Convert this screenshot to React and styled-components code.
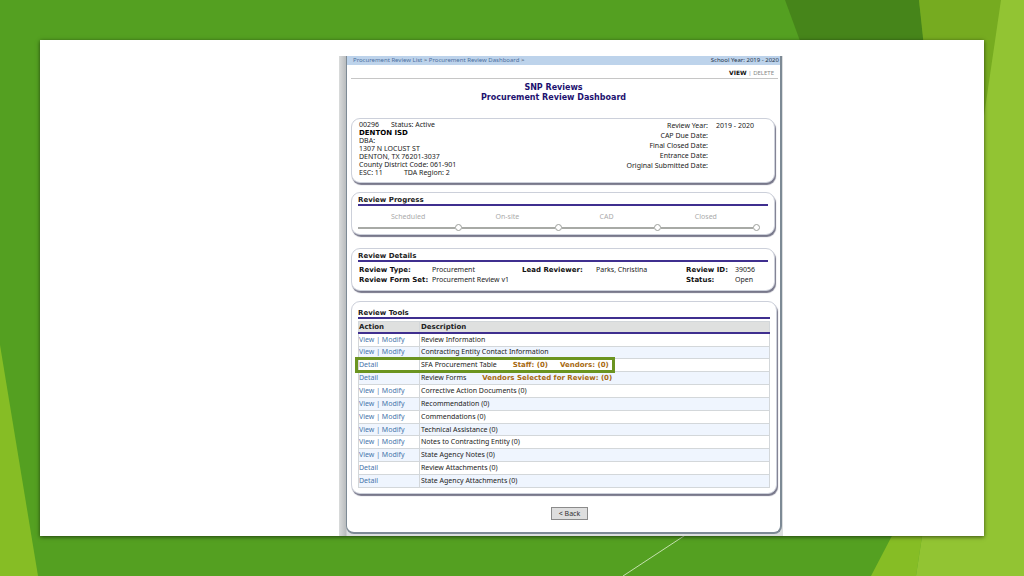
import React from 'react'
import styled, { createGlobalStyle } from 'styled-components'

const details = [
    ['Review Type:', 'Procurement', 'Lead Reviewer:', 'Parks, Christina', 'Review ID:', '39056'],
    ['Review Form Set:', 'Procurement Review v1', '', '', 'Status:', 'Open'],
]

const tools = [
    { name: 'Review Information', edit: true },
    { name: 'Contracting Entity Contact Information', edit: true },
    { name: 'SFA Procurement Table', notes: ['Staff: (0)', 'Vendors: (0)'], marked: true },
    { name: 'Review Forms', notes: ['Vendors Selected for Review: (0)'] },
    { name: 'Corrective Action Documents (0)', edit: true },
    { name: 'Recommendation (0)', edit: true },
    { name: 'Commendations (0)', edit: true },
    { name: 'Technical Assistance (0)', edit: true },
    { name: 'Notes to Contracting Entity (0)', edit: true },
    { name: 'State Agency Notes (0)', edit: true },
    { name: 'Review Attachments (0)' },
    { name: 'State Agency Attachments (0)' },
]

const dates = ['CAP Due Date:', 'Final Closed Date:', 'Entrance Date:', 'Original Submitted Date:']

function Backdrop() {
    return (
        <Facets viewBox="0 0 1024 576" preserveAspectRatio="none" aria-hidden="true">
            <polygon points="0,345 38,576 0,576" fill="#86bd25" />
            <polygon points="785,0 919,0 926,60 807,60" fill="#46851a" />
            <polygon points="919,0 1024,0 1024,200 940,200" fill="#76ab20" />
            <polygon points="1001,0 1024,0 1024,576 960,576 960,280" fill="#92c433" />
            <polygon points="895,530 923,530 916,576 871,576" fill="#86bd25" />
            <polygon points="923,530 1024,530 1024,576 916,576" fill="#92c433" />
            <line x1="690" y1="532" x2="623" y2="576" stroke="#c5e0ae" strokeWidth="1" />
        </Facets>
    )
}

function App() {
    return (
        <Slide>
            <GlobalStyle />
            <Backdrop />
            <Sheet>
                <Frame>
                    <Page>
                        <TopBar>
                            <nav>
                                <a href="#list">Procurement Review List</a> &gt; <a href="#dashboard">Procurement Review Dashboard</a> &gt;
                            </nav>
                            <span>School Year: 2019 - 2020</span>
                        </TopBar>
                        <Modes>
                            <a href="#view">VIEW</a> | <span>DELETE</span>
                        </Modes>
                        <Title>SNP Reviews<br />Procurement Review Dashboard</Title>

                        <Entity>
                            <Address>
                                <div><Gap>00296</Gap>Status: Active</div>
                                <h2>DENTON ISD</h2>
                                <div>DBA:</div>
                                <div>1307 N LOCUST ST</div>
                                <div>DENTON, TX 76201-3037</div>
                                <div>County District Code: 061-901</div>
                                <div><Gap $wide>ESC: 11</Gap>TDA Region: 2</div>
                            </Address>
                            <Dates>
                                <dt>Review Year:</dt><dd>2019 - 2020</dd>
                                {dates.map((label) => (
                                    <React.Fragment key={label}><dt>{label}</dt><dd /></React.Fragment>
                                ))}
                            </Dates>
                        </Entity>

                        <Progress>
                            <Heading>Review Progress</Heading>
                            <Steps>
                                {['Scheduled', 'On-site', 'CAD', 'Closed'].map((step) => (
                                    <Step key={step}>
                                        <StepName>{step}</StepName>
                                        <Track><Line /><Ring /></Track>
                                    </Step>
                                ))}
                            </Steps>
                        </Progress>

                        <Details>
                            <Heading>Review Details</Heading>
                            <DetailGrid>
                                {details.flat().map((text, i) => (
                                    i % 2 ? <dd key={i}>{text}</dd> : <dt key={i}>{text}</dt>
                                ))}
                            </DetailGrid>
                        </Details>

                        <Tools>
                            <Heading>Review Tools</Heading>
                            <Table>
                                <thead>
                                    <tr><th>Action</th><th>Description</th></tr>
                                </thead>
                                <tbody>
                                    {tools.map((tool) => (
                                        <tr key={tool.name}>
                                            <ActionCell $marked={tool.marked}>
                                                {tool.edit
                                                    ? <><a href="#view">View</a> | <a href="#modify">Modify</a></>
                                                    : <a href="#detail">Detail</a>}
                                            </ActionCell>
                                            <td>
                                                {tool.name}
                                                {tool.notes && tool.notes.map((note, i) => <Note key={note} $next={i > 0}>{note}</Note>)}
                                            </td>
                                        </tr>
                                    ))}
                                </tbody>
                            </Table>
                        </Tools>

                        <BackButton type="button">&lt; Back</BackButton>
                    </Page>
                </Frame>
            </Sheet>
        </Slide>
    )
}

const bold = '"DejaVu Sans", Verdana, sans-serif'

const GlobalStyle = createGlobalStyle`
*, *::after{
    box-sizing: border-box;
    margin: 0;
    padding: 0;
}
body{
    background: #54a021;
    color: #222;
    font-family: "Noto Sans", sans-serif;
    font-size: 7px;
    line-height: 8px;
}
a{
    color: inherit;
    text-decoration: none;
}
`

const Slide = styled.div`
position: relative;
min-height: 100vh;
padding: 40px;
overflow: hidden;
`

const Facets = styled.svg`
position: absolute;
inset: 0;
width: 100%;
height: 100%;
`

const Sheet = styled.main`
position: relative;
display: grid;
grid-template-columns: 299fr 444fr 201fr;
padding-top: 16px;
background: #fff;
box-shadow: 0 1px 4px rgba(0, 0, 0, 0.6);
`

const Frame = styled.div`
grid-column: 2;
padding: 0 1px 2px 7px;
background: linear-gradient(90deg, #d9dbdb, #b9bcbe 7px, #dcdedf 8px);
`

const Page = styled.div`
display: flex;
flex-direction: column;
padding-bottom: 12px;
background: #fff;
border: solid #7d8a95;
border-width: 0 2px 2px 1px;
border-radius: 0 0 8px 8px;
`

const TopBar = styled.header`
display: flex;
justify-content: space-between;
padding: 0 1px 0 6px;
background: #bdd3eb;
color: #26354c;
font-size: 6px;
line-height: 9px;
a{
    color: #4c6f9e;
}
`

const Modes = styled.div`
margin: 0 2px 0 4px;
padding: 3px 4px 0 0;
border-bottom: 1px solid #c6c6c6;
color: #888;
font-size: 6px;
line-height: 9px;
text-align: right;
a{
    color: #111;
    font-family: ${bold};
    font-weight: bold;
}
`

const Title = styled.h1`
padding: 4px 0 15px;
margin-right: 20px;
color: #1d1270;
font-family: ${bold};
font-size: 8px;
line-height: 10px;
text-align: center;
`

const Panel = styled.section`
margin: 0 5px 0 4px;
padding: 0 6px;
border: 1px solid #ccd0da;
border-radius: 9px;
background: #fff;
box-shadow: 1px 2px 1px #77778a;
`

const Entity = styled(Panel)`
display: flex;
justify-content: space-between;
padding: 2px 17px 5px 7px;
margin-bottom: 9px;
`

const Address = styled.div`
h2{
    color: #000;
    font-family: ${bold};
    font-size: 7px;
    line-height: 8px;
}
`

const Gap = styled.span`
margin-right: ${({ $wide }) => ($wide ? '21px' : '12px')};
`

const Dates = styled.dl`
display: grid;
grid-template-columns: auto 41px;
align-content: start;
column-gap: 8px;
line-height: 10px;
text-align: right;
dd{
    text-align: left;
    white-space: nowrap;
}
`

const Heading = styled.h3`
padding: 3px 0 0;
border-bottom: 2px solid #3f2f8f;
color: #222;
font-family: ${bold};
font-size: 7px;
line-height: 8px;
`

const Progress = styled(Panel)`
margin-bottom: 13px;
padding-bottom: 3px;
`

const Steps = styled.ol`
display: flex;
padding: 7px 8px 0 5px;
list-style: none;
`

const Track = styled.div`
display: flex;
align-items: center;
padding-top: 3px;
`

const Step = styled.li`
flex: 1;
color: #aaa;
text-align: center;
&:first-child ${Track}{
    margin-left: -5px;
}
`

const StepName = styled.div`
padding-right: 9px;
`

const Line = styled.div`
flex: 1;
height: 2px;
background: #a8aaa6;
`

const Ring = styled.div`
width: 7px;
height: 7px;
border: 1px solid #9c9e9a;
border-radius: 50%;
`

const Details = styled(Panel)`
margin-bottom: 10px;
padding-bottom: 5px;
`

const DetailGrid = styled.dl`
display: grid;
grid-template-columns: 73fr 90fr 74fr 90fr 49fr 33fr;
padding: 3px 0 0 1px;
line-height: 10px;
white-space: nowrap;
dt{
    color: #111;
    font-family: ${bold};
    font-weight: bold;
}
`

const Tools = styled(Panel)`
margin-right: 3px;
padding: 4px 6px 5px;
`

const Table = styled.table`
width: 100%;
height: 167px;
margin-top: 2px;
border-collapse: collapse;
th, td{
    padding: 0 1px;
    border: 1px solid #d3d7da;
    text-align: left;
}
th{
    height: 11px;
    background: #dfe0df;
    border-bottom: 2px solid #3f2f8f;
    color: #222;
    font-family: ${bold};
}
th:first-child{
    width: 61px;
}
th:first-child, td:first-child{
    padding: 0;
}
tbody tr:nth-child(even){
    background: #eff5fe;
}
`

const ActionCell = styled.td`
color: #4775ab;
${({ $marked }) => $marked && `
    position: relative;
    z-index: 1;
    &::after{
        content: '';
        position: absolute;
        top: -2px;
        left: -4px;
        width: 260px;
        height: 16px;
        border: 3px solid #6b9420;
        pointer-events: none;
    }
`}
`

const Note = styled.b`
margin-left: ${({ $next }) => ($next ? '12px' : '16px')};
color: #a8690f;
font-family: ${bold};
`

const BackButton = styled.button`
align-self: center;
margin: 13px 0 0 12px;
padding: 0 7px;
border: 1px solid #8b8b8b;
background: #dedede;
color: #333;
font-family: inherit;
font-size: 7px;
line-height: 11px;
`

export default App
